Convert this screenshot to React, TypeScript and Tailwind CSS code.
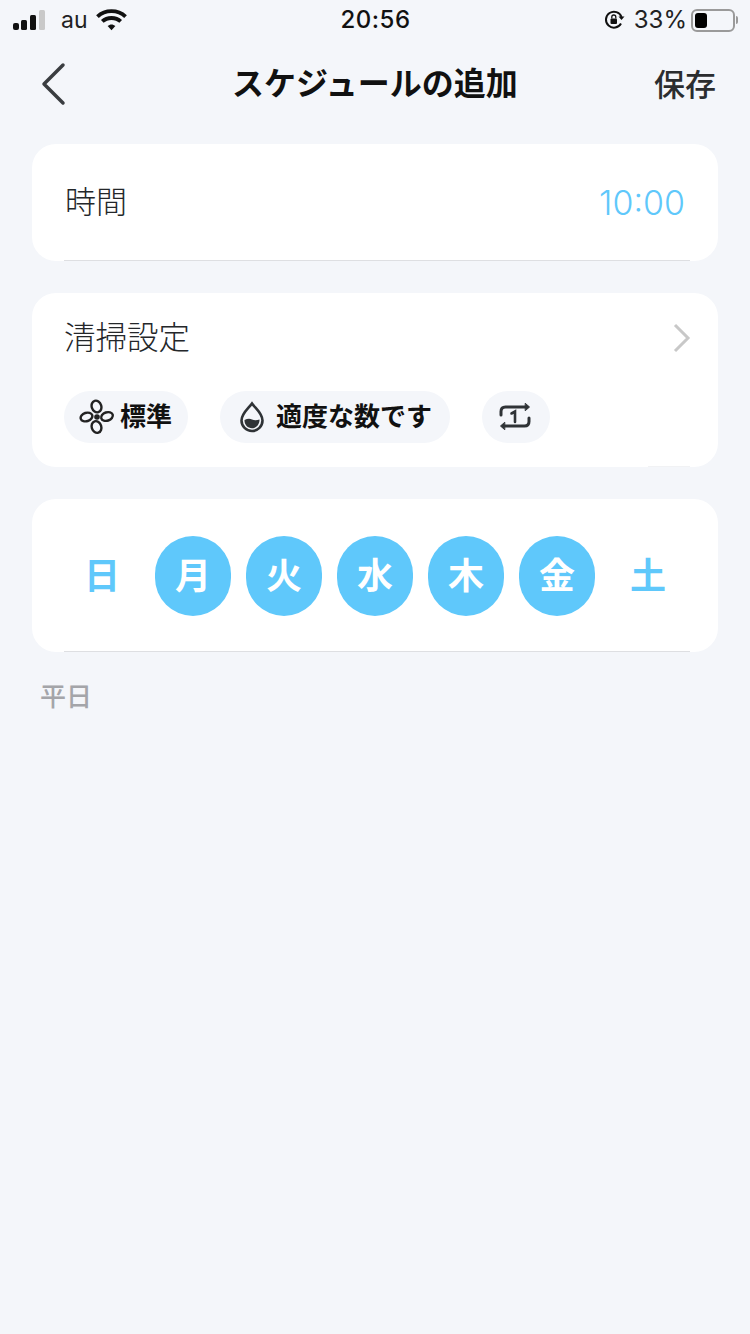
const fontStack = { fontFamily: '"Inter", "Noto Sans CJK JP", sans-serif' };

function StatusBar() {
  return (
    <div className="grid h-[40px] grid-cols-3 items-center pl-[13px] pr-[12px] text-[#111]">
      <div className="flex items-center">
        <svg width="34" height="22" viewBox="0 0 34 22" fill="currentColor">
          <rect x="0" y="14" width="6" height="7" rx="2" />
          <rect x="8" y="11" width="6" height="10" rx="1.5" />
          <rect x="17" y="6" width="6" height="15" rx="1.5" />
          <rect x="26" y="1" width="6" height="20" rx="1.5" fill="#c9c9c9" />
        </svg>
        <span className="ml-[14px] text-[23px] leading-none text-[#222]">au</span>
        <svg className="ml-[8px]" width="31" height="24" viewBox="0 0 32 24" fill="none" stroke="currentColor">
          <path d="M1.500 8.500C9.500 1 22.500 1 30.500 8.500" strokeWidth="4" />
          <path d="M6.500 13.500C11.500 8.800 20.500 8.800 25.500 13.500" strokeWidth="4" />
          <path d="M12 18.300 16 22.500l4-4.200C17.500 16 14.500 16 12 18.300Z" fill="currentColor" stroke="none" />
        </svg>
      </div>
      <div className="text-center text-[24px] font-medium tracking-[0.5px]">20:56</div>
      <div className="flex items-center justify-end">
        <svg width="22" height="22" viewBox="0 0 22 22" fill="none" stroke="currentColor">
          <path d="M18 14.500A8 8 0 1 1 18.500 8" strokeWidth="2" />
          <path d="M15.500 7.500h6l-3 3.500Z" fill="currentColor" stroke="none" />
          <rect x="7.500" y="9.500" width="6.500" height="5.500" rx="1" fill="currentColor" stroke="none" />
          <path d="M8.800 9.500V8a2 2 0 0 1 4 0v1.500" strokeWidth="1.300" />
        </svg>
        <span className="ml-[9px] text-[24px] leading-none text-[#222]">33%</span>
        <div className="ml-[4px] flex h-[23px] w-[44px] items-center rounded-[6px] border-2 border-[#9a9a9a] p-[2px]">
          <div className="h-full w-[12px] rounded-[3px] bg-black" />
        </div>
        <div className="ml-[1px] h-[8px] w-[2px] rounded-r bg-[#9a9a9a]" />
      </div>
    </div>
  );
}

function NavBar() {
  return (
    <div className="grid h-[88px] grid-cols-[1fr_auto_1fr] items-center px-[34px]">
      <svg className="ml-[7px]" width="26" height="44" viewBox="0 0 26 44" fill="none" stroke="#3a3d40" strokeWidth="3.500" strokeLinecap="round" strokeLinejoin="round">
        <path d="M22 3 3 22l19 19" />
      </svg>
      <div className="text-[32px] font-bold leading-none text-[#111]">スケジュールの追加</div>
      <div className="text-right text-[31px] font-medium leading-none text-[#2b2d2f]">保存</div>
    </div>
  );
}

function Divider() {
  return <div className="absolute bottom-0 left-[32px] right-[28px] h-px bg-[#dedfe2]" />;
}

function FanIcon() {
  return (
    <svg width="36" height="36" viewBox="0 0 36 36" fill="none" stroke="#222" strokeWidth="2.400">
      <circle cx="18" cy="18" r="2.800" fill="#222" stroke="none" />
      <ellipse cx="17.500" cy="7.500" rx="4.800" ry="6" transform="rotate(-18 17.500 7.500)" />
      <ellipse cx="17.500" cy="28" rx="4.800" ry="6" transform="rotate(-18 17.500 28)" />
      <ellipse cx="7.500" cy="18" rx="6" ry="4.200" transform="rotate(-18 7.500 18)" />
      <ellipse cx="28" cy="17.500" rx="6" ry="4.200" transform="rotate(-18 28 17.500)" />
    </svg>
  );
}

function DropIcon() {
  return (
    <svg width="26" height="32" viewBox="0 0 26 32" fill="none">
      <path d="M13 2.500C9 8 2.500 12.500 2.500 19.500a10.500 10.500 0 0 0 21 0C23.500 12.500 17 8 13 2.500Z" stroke="#2f3336" strokeWidth="2.600" />
      <path d="M5.500 19c3-1.500 5.500-1.500 7.500-.5s5 1 7.500 0c.3 4.500-3 8.800-7.500 8.800S5.200 23.500 5.500 19Z" fill="#2f3336" />
    </svg>
  );
}

function RepeatOneIcon() {
  return (
    <svg width="32" height="30" viewBox="0 0 32 30" fill="none" stroke="#2f3336" strokeWidth="3" strokeLinecap="round">
      <path d="M2 13V9.500C2 6.500 4 5 6.500 5H27" />
      <path d="M26.500 1.500 30.500 5l-4 3.500Z" fill="#2f3336" strokeWidth="1" strokeLinejoin="round" />
      <path d="M30 16v3.500c0 3-2 4.500-4.500 4.500H5" />
      <path d="M5.500 20.500 1.500 24l4 3.500Z" fill="#2f3336" strokeWidth="1" strokeLinejoin="round" />
      <path d="M12.500 11.500 16 9.500V20" strokeWidth="2.600" />
    </svg>
  );
}

function Chip({ children, className }: { children: React.ReactNode; className: string }) {
  return <div className={`flex h-[52px] items-center rounded-full bg-[#f4f6fa] ${className}`}>{children}</div>;
}

const days = [
  { label: "日", on: false },
  { label: "月", on: true },
  { label: "火", on: true },
  { label: "水", on: true },
  { label: "木", on: true },
  { label: "金", on: true },
  { label: "土", on: false },
];

export default function App() {
  return (
    <div className="min-h-[1334px] w-[750px] bg-[#f4f6fa]" style={fontStack}>
      <StatusBar />
      <NavBar />

      <div className="mt-[16px] flex flex-col gap-[32px] px-[32px]">
        <div className="relative flex h-[117px] items-center justify-between rounded-[24px] bg-white px-[33px]">
          <div className="text-[31px] font-light text-[#24272a]">時間</div>
          <div className="text-[34px] font-light text-[#5fc8fb]">10:00</div>
          <Divider />
        </div>

        <div className="relative h-[174px] rounded-[24px] bg-white px-[32px] pt-[23px]">
          <div className="flex items-center justify-between">
            <div className="text-[31.5px] font-light leading-[44px] text-[#24272a]">清掃設定</div>
            <svg className="mr-[-6px]" width="20" height="30" viewBox="0 0 20 30" fill="none" stroke="#c8c8c8" strokeWidth="3">
              <path d="M3 2 16 15 3 28" />
            </svg>
          </div>
          <div className="mt-[31px] flex gap-[32px]">
            <Chip className="w-[124px] pl-[15px]">
              <FanIcon />
              <span className="ml-[5px] pb-[2px] text-[26px] font-bold text-[#111]">標準</span>
            </Chip>
            <Chip className="w-[230px] pl-[19px]">
              <DropIcon />
              <span className="ml-[11px] pb-[2px] text-[26px] font-bold text-[#111]">適度な数です</span>
            </Chip>
            <Chip className="w-[68px] justify-center pr-[3px]">
              <RepeatOneIcon />
            </Chip>
          </div>
          <div className="absolute bottom-0 right-[28px] h-px w-[42px] bg-[#f1f2f4]" />
        </div>

        <div className="relative flex h-[153px] items-center justify-center gap-[15px] rounded-[24px] bg-white">
          {days.map((d) =>
            d.on ? (
              <div key={d.label} className="flex h-[80px] w-[76px] items-center justify-center rounded-full bg-[#5fc8fb] text-[36px] font-bold text-white">
                {d.label}
              </div>
            ) : (
              <div key={d.label} className="flex h-[80px] w-[76px] items-center justify-center text-[36px] font-bold text-[#5fc8fb]">
                {d.label}
              </div>
            ),
          )}
          <Divider />
        </div>
      </div>

      <div className="mt-[27px] pl-[40px] text-[26px] font-medium leading-[36px] text-[#a4a5a9]">平日</div>
    </div>
  );
}
